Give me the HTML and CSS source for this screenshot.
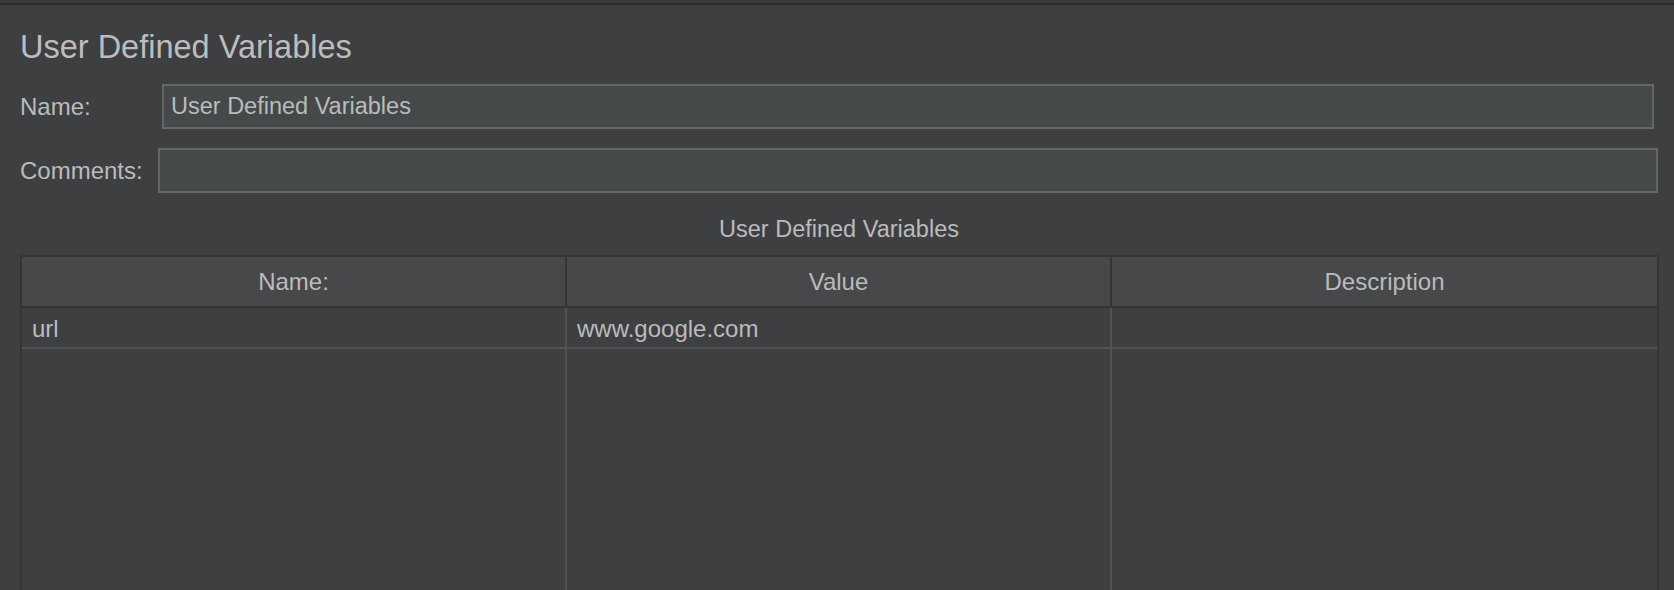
FILE: index.html
```html
<!DOCTYPE html>
<html>
<head>
<meta charset="UTF-8">
<title>User Defined Variables</title>
<link rel="stylesheet" href="styles.css">
</head>
<body>
	<div class="topline"></div>
	<div class="panel">
		<h1 class="title">User Defined Variables</h1>

		<div class="field name-row">
			<label class="label">Name:</label>
			<div class="input">User Defined Variables</div>
		</div>
		<div class="field comments-row">
			<label class="label">Comments:</label>
			<div class="input"></div>
		</div>

		<p class="caption">User Defined Variables</p>

		<div class="table-wrap">
			<table class="vars">
				<thead>
					<tr>
						<th>Name:</th>
						<th>Value</th>
						<th>Description</th>
					</tr>
				</thead>
				<tbody>
					<tr class="row">
						<td>url</td>
						<td>www.google.com</td>
						<td></td>
					</tr>
					<tr class="filler">
						<td></td>
						<td></td>
						<td></td>
					</tr>
				</tbody>
			</table>
		</div>
	</div>
</body>
</html>
```

FILE: styles.css
```css
html, body{
	margin:0;
	padding:0;
	height:590px;
	overflow:hidden;
}
body{
	background:#3e3f41;
	color:#bbbbbb;
	font-family:"Liberation Sans", Arial, sans-serif;
	font-size:24px;
}
.topline{
	height:3px;
	background:#3a3b3d;
	border-bottom:2px solid #2b2c2e;
}
.panel{
	padding-top:22px;
}
.title{
	margin:0 0 0 20px;
	font-size:32.5px;
	font-weight:normal;
	line-height:40px;
	color:#bdbdbd;
}

/* form rows */
.field{
	display:flex;
	align-items:center;
	padding-left:20px;
}
.name-row{
	margin-top:17px;
	padding-right:20px;
}
.name-row .label{
	width:142px;
}
.comments-row{
	margin-top:19px;
	padding-right:16px;
}
.comments-row .label{
	width:138px;
}
.label{
	flex:none;
}
.input{
	flex:1;
	height:41px;
	line-height:41px;
	padding:0 7px;
	background:#45494a;
	border:2px solid #656667;
	color:#bbbbbb;
	font-size:23.5px;
}

.caption{
	margin:22px 0 0;
	height:28px;
	line-height:28px;
	text-align:center;
	padding-left:4px;
	font-size:23.5px;
}

/* table */
.table-wrap{
	margin:12px 15px 0 20px;
	border:2px solid #343537;
	border-bottom:none;
}
.vars{
	width:100%;
	table-layout:fixed;
	border-spacing:0;
}
.vars th{
	height:49px;
	padding:0;
	background:#47484a;
	font-weight:normal;
	color:#bbbbbb;
	border-right:2px solid #343537;
	border-bottom:2px solid #343537;
}
.vars td{
	padding:2px 10px 0;
	background:#3e3f41;
	border-right:2px solid #515254;
	white-space:nowrap;
}
.vars th:last-child,
.vars td:last-child{
	border-right:none;
}
.row td{
	height:37px;
	border-bottom:2px solid #515254;
}
.filler td{
	height:300px;
}
```
